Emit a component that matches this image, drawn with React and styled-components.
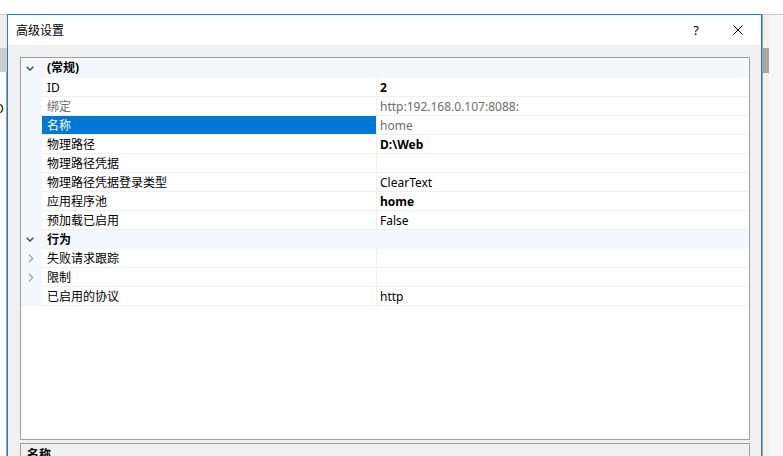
import React from "react";
import styled, { createGlobalStyle } from "styled-components";

const GlobalStyle = createGlobalStyle`
  html, body {
    margin: 0;
    padding: 0;
    background: #fff;
  }
  body {
    font-family: "Noto Sans", "Noto Sans CJK SC", sans-serif;
    font-size: 12px;
    color: #000;
  }
`;

const Desktop = styled.div`
  position: relative;
  width: 783px;
  height: 456px;
  overflow: hidden;
  background: #fff;
`;

/* window behind the dialog, only its edges show */
const BackWindow = styled.div`
  position: absolute;
  left: 0;
  top: 14px;
  right: 0;
  bottom: 0;
  display: flex;
  justify-content: space-between;
  border-top: 1px solid #c9c9c9;
  background: #f0f0f0;
`;

const BackLeft = styled.div`
  width: 7px;
  display: flex;
  flex-direction: column;
  overflow: hidden;
`;

const BackToolbar = styled.div`
  height: 33px;
  background: #f0f0f0;
`;

const BackHeader = styled.div`
  height: 24px;
  background: #cdcdcd;
`;

const BackList = styled.div`
  flex: 1;
  background: #fff;
  border-right: 1px solid #a0a0a0;
  padding-top: 29px;
`;

const BackItem = styled.div`
  margin-left: -5px;
  line-height: 16px;
`;

const BackRight = styled.div`
  width: 20px;
  display: flex;
  border-left: 1px solid #a0a0a0;
  background: #f7f7f7;
`;

const ScrollTrack = styled.div`
  width: 6px;
  background: #f0f0f0;
  padding-top: 33px;
`;

const ScrollThumb = styled.div`
  height: 25px;
  background: #a6a6a6;
`;

const Dialog = styled.div`
  position: absolute;
  left: 7px;
  top: 14px;
  width: 755px;
  bottom: -20px;
  box-sizing: border-box;
  border: 1px solid #1a7fd4;
  background: #f0f0f0;
  display: flex;
  flex-direction: column;
`;

const TitleBar = styled.div`
  height: 30px;
  flex-shrink: 0;
  display: flex;
  align-items: center;
  background: #fff;
  padding-left: 8px;
`;

const Title = styled.div`
  flex: 1;
  font-size: 12px;
`;

const TitleButton = styled.div`
  width: ${(p) => p.$w}px;
  height: 30px;
  display: flex;
  align-items: center;
  justify-content: center;
  font-size: 13px;
`;

const DialogBody = styled.div`
  flex: 1;
  display: flex;
  flex-direction: column;
  padding: 12px 11px 0 12px;
`;

const PropertyGrid = styled.div`
  height: 383px;
  flex-shrink: 0;
  box-sizing: border-box;
  border: 1px solid #a0a0a0;
  background: #fff;
  display: flex;
  flex-direction: column;
`;

const CategoryRow = styled.div`
  height: ${(p) => (p.$first ? 20 : 19)}px;
  flex-shrink: 0;
  display: flex;
  align-items: center;
  background: #f4f7fc;
  font-weight: bold;
`;

const Row = styled.div`
  height: 19px;
  flex-shrink: 0;
  display: flex;
`;

const Gutter = styled.div`
  width: 21px;
  flex-shrink: 0;
  display: flex;
  align-items: center;
  padding-left: ${(p) => p.$pad}px;
  box-sizing: border-box;
  background: #f4f7fc;
`;

const CategoryTitle = styled.div`
  padding-left: 5px;
  line-height: 18px;
`;

const NameCell = styled.div`
  width: 329px;
  height: 18px;
  flex-shrink: 0;
  box-sizing: content-box;
  padding-left: 5px;
  line-height: 20px;
  border-bottom: 1px solid #f0f0f0;
  border-right: 1px solid #f0f0f0;
  background: ${(p) => (p.$selected ? "#0078d7" : "#fff")};
  color: ${(p) => (p.$selected ? "#fff" : p.$muted ? "#6d6d6d" : "#000")};
  white-space: nowrap;
`;

const ValueCell = styled.div`
  flex: 1;
  height: 18px;
  padding-left: 3px;
  line-height: 20px;
  border-bottom: 1px solid #f0f0f0;
  font-weight: ${(p) => (p.$bold ? "bold" : "normal")};
  color: ${(p) => (p.$muted ? "#6d6d6d" : "#000")};
  white-space: nowrap;
`;

const DescriptionPanel = styled.div`
  margin-top: 3px;
  height: 70px;
  border: 1px solid #a0a0a0;
  background: #f0f0f0;
  padding: 3px 6px;
`;

const DescTitle = styled.div`
  font-weight: bold;
  line-height: 16px;
`;

const ChevronDown = () => (
  <svg width="8" height="5" viewBox="0 0 8 5">
    <path d="M0.7 0.7 L4 4 L7.3 0.7" fill="none" stroke="#444" strokeWidth="1.4" />
  </svg>
);

const ChevronRight = () => (
  <svg width="6" height="9" viewBox="0 0 6 9">
    <path d="M1 0.8 L4.7 4.5 L1 8.2" fill="none" stroke="#a5a5a5" strokeWidth="1.3" />
  </svg>
);

const CloseIcon = () => (
  <svg width="10" height="10" viewBox="0 0 10 10">
    <path d="M0.5 0.5 L9.5 9.5 M9.5 0.5 L0.5 9.5" stroke="#000" strokeWidth="1" />
  </svg>
);

const sections = [
  {
    title: "(常规)",
    rows: [
      { name: "ID", value: "2", bold: true },
      { name: "绑定", value: "http:192.168.0.107:8088:", mutedName: true, mutedValue: true },
      { name: "名称", value: "home", selected: true, mutedValue: true },
      { name: "物理路径", value: "D:\\Web", bold: true },
      { name: "物理路径凭据", value: "" },
      { name: "物理路径凭据登录类型", value: "ClearText" },
      { name: "应用程序池", value: "home", bold: true },
      { name: "预加载已启用", value: "False" },
    ],
  },
  {
    title: "行为",
    rows: [
      { name: "失败请求跟踪", value: "", expandable: true },
      { name: "限制", value: "", expandable: true },
      { name: "已启用的协议", value: "http" },
    ],
  },
];

const App = () => (
  <>
    <GlobalStyle />
    <Desktop>
      <BackWindow>
        <BackLeft>
          <BackToolbar />
          <BackHeader />
          <BackList>
            <BackItem>D</BackItem>
          </BackList>
        </BackLeft>
        <BackRight>
          <ScrollTrack>
            <ScrollThumb />
          </ScrollTrack>
        </BackRight>
      </BackWindow>

      <Dialog>
        <TitleBar>
          <Title>高级设置</Title>
          <TitleButton $w={38}>?</TitleButton>
          <TitleButton $w={46}>
            <CloseIcon />
          </TitleButton>
        </TitleBar>
        <DialogBody>
          <PropertyGrid>
            {sections.map((section, si) => (
              <React.Fragment key={section.title}>
                <CategoryRow $first={si === 0}>
                  <Gutter $pad={5}>
                    <ChevronDown />
                  </Gutter>
                  <CategoryTitle>{section.title}</CategoryTitle>
                </CategoryRow>
                {section.rows.map((row) => (
                  <Row key={row.name}>
                    <Gutter $pad={7}>
                      {row.expandable && <ChevronRight />}
                    </Gutter>
                    <NameCell $selected={row.selected} $muted={row.mutedName}>
                      {row.name}
                    </NameCell>
                    <ValueCell $bold={row.bold} $muted={row.mutedValue}>
                      {row.value}
                    </ValueCell>
                  </Row>
                ))}
              </React.Fragment>
            ))}
          </PropertyGrid>
          <DescriptionPanel>
            <DescTitle>名称</DescTitle>
          </DescriptionPanel>
        </DialogBody>
      </Dialog>
    </Desktop>
  </>
);

export default App;
